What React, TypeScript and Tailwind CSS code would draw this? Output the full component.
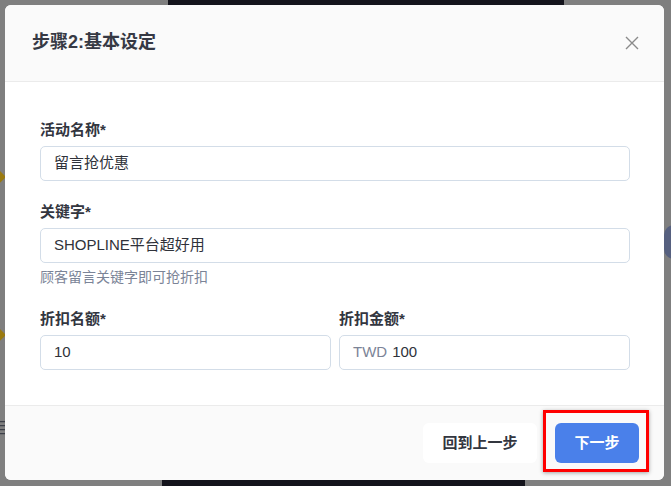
const FONT = { fontFamily: '"Liberation Sans", "Noto Sans CJK SC", sans-serif' };

function Label({ children }: { children: React.ReactNode }) {
  return (
    <div className="text-[15px] leading-5 font-semibold text-[#33363f] mb-[6px]">{children}</div>
  );
}

function Input({ children }: { children: React.ReactNode }) {
  return (
    <div className="h-[35px] rounded-[5px] border border-[#d3dde8] bg-white flex items-center px-[13px] text-[15px] text-[#2f323a]">
      {children}
    </div>
  );
}

export default function App() {
  return (
    <div
      className="relative w-[671px] h-[486px] overflow-hidden bg-[#7f7f7f] pt-[5px] pl-[5px] pr-[7px] pb-[6px]"
      style={FONT}
    >
      {/* page behind the overlay */}
      <div className="absolute left-[168px] top-0 w-[396px] h-[5px] bg-[#14141c]" />
      <div className="absolute left-[162px] bottom-0 w-[363px] h-[6px] bg-[#14141c]" />
      <div className="absolute left-[-6px] top-[172px] w-[9px] h-[12px] rotate-45 bg-[#9a7a10]" />
      <div className="absolute left-[-6px] top-[330px] w-[9px] h-[12px] rotate-45 bg-[#9a7a10]" />
      <div className="absolute left-[-5px] top-[417px] text-[16px] text-[#3c3f48]">目</div>
      <div className="absolute left-[664px] top-[225px] w-[20px] h-[34px] rounded-full bg-[#56607f]" />

      <div className="relative h-full rounded-[6px] bg-white flex flex-col">
        {/* header */}
        <div className="h-[77px] rounded-t-[6px] bg-[#fafafa] border-b border-[#ebebeb] flex items-center justify-between pl-[27px] pr-[25px]">
          <div className="text-[18px] font-bold text-[#363944] -mt-[1px]">步骤2:基本设定</div>
          <svg width="14" height="14" viewBox="0 0 14 14" className="-mt-[1px]">
            <path d="M1 1 L13 13 M13 1 L1 13" stroke="#8a8a8a" strokeWidth="1.4" />
          </svg>
        </div>

        {/* body */}
        <div className="flex-1 pt-[38px] pl-[35px] pr-[34px]">
          <Label>活动名称*</Label>
          <Input>留言抢优惠</Input>

          <div className="mt-[21px]">
            <Label>关键字*</Label>
            <Input>SHOPLINE平台超好用</Input>
            <div className="mt-[6px] text-[14px] leading-4 text-[#7b8497]">顾客留言关键字即可抢折扣</div>
          </div>

          <div className="mt-[24px] flex gap-[8px]">
            <div className="flex-1">
              <Label>折扣名额*</Label>
              <Input>10</Input>
            </div>
            <div className="flex-1">
              <Label>折扣金额*</Label>
              <Input>
                <span className="text-[#7b8497] mr-[5px]">TWD</span>
                <span>100</span>
              </Input>
            </div>
          </div>
        </div>

        {/* footer */}
        <div className="h-[75px] rounded-b-[6px] bg-[#fafafa] border-t border-[#ebebeb] flex items-start justify-end gap-[18px] pt-[17px] pr-[25px]">
          <button className="h-[40px] w-[114px] rounded-[6px] bg-white text-[15px] font-bold text-[#33363f]">
            回到上一步
          </button>
          <div className="relative">
            <button className="h-[40px] w-[84px] rounded-[6px] bg-[#4a80ea] text-[15px] font-bold text-white">
              下一步
            </button>
            <div className="absolute -left-[12px] -right-[10px] -top-[13px] -bottom-[9px] border-[3px] border-[#ff0000] shadow-[0_1px_4px_rgba(0,0,0,0.35)]" />
          </div>
        </div>
      </div>
    </div>
  );
}
